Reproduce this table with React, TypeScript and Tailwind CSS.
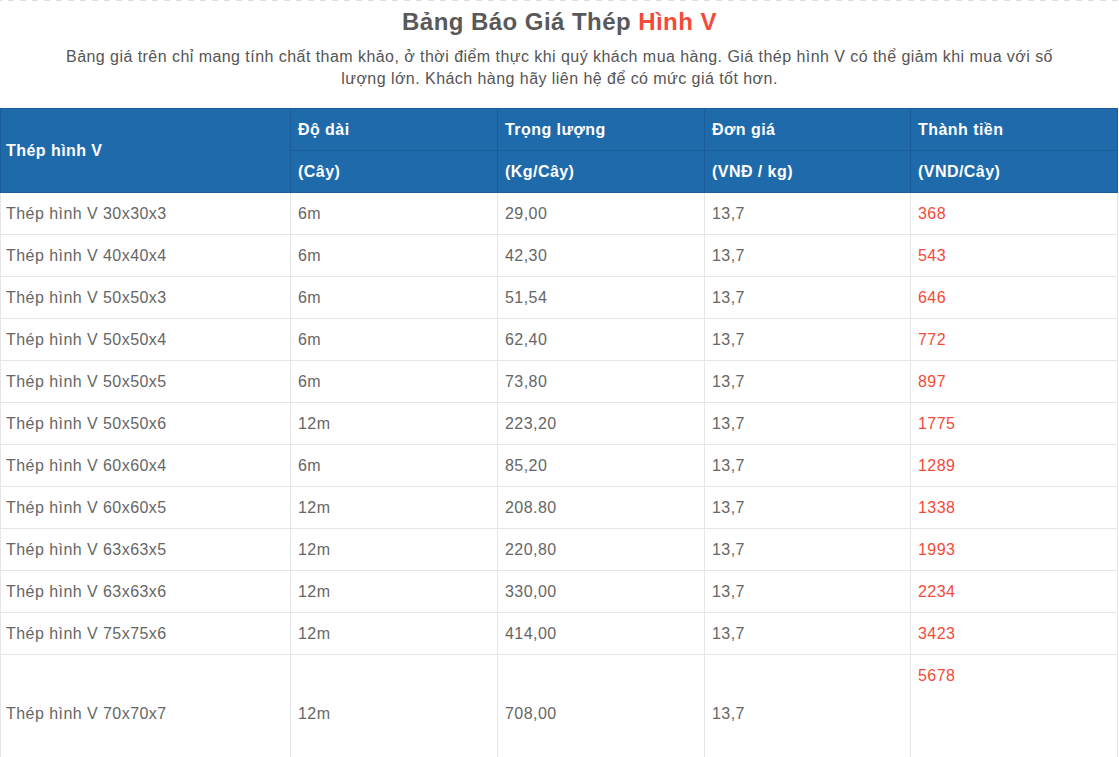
import React from 'react';

const rows = [
  { name: 'Thép hình V 30x30x3', len: '6m', weight: '29,00', price: '13,7', total: '368' },
  { name: 'Thép hình V 40x40x4', len: '6m', weight: '42,30', price: '13,7', total: '543' },
  { name: 'Thép hình V 50x50x3', len: '6m', weight: '51,54', price: '13,7', total: '646' },
  { name: 'Thép hình V 50x50x4', len: '6m', weight: '62,40', price: '13,7', total: '772' },
  { name: 'Thép hình V 50x50x5', len: '6m', weight: '73,80', price: '13,7', total: '897' },
  { name: 'Thép hình V 50x50x6', len: '12m', weight: '223,20', price: '13,7', total: '1775' },
  { name: 'Thép hình V 60x60x4', len: '6m', weight: '85,20', price: '13,7', total: '1289' },
  { name: 'Thép hình V 60x60x5', len: '12m', weight: '208.80', price: '13,7', total: '1338' },
  { name: 'Thép hình V 63x63x5', len: '12m', weight: '220,80', price: '13,7', total: '1993' },
  { name: 'Thép hình V 63x63x6', len: '12m', weight: '330,00', price: '13,7', total: '2234' },
  { name: 'Thép hình V 75x75x6', len: '12m', weight: '414,00', price: '13,7', total: '3423' },
];

const th = 'border border-[#1a5d99] px-[7px] py-2 text-left font-bold leading-[25px]';
const td = 'border border-[#e6e6e6] px-[7px] py-2 leading-[25px]';

export default function App() {
  return (
    <div className="bg-white font-['Liberation_Sans',Arial,sans-serif] text-[16px] tracking-[0.45px] text-[#666]">
      {/* dashed divider */}
      <div className="h-px bg-[repeating-linear-gradient(90deg,#ddd_0_2px,transparent_2px_8px,#ddd_8px_12px)]" />

      <h2 className="pt-[6px] text-center text-[24px] font-bold leading-[30px] text-[#595959]">
        Bảng Báo Giá Thép <span className="text-[#f44a3a]">Hình V</span>
      </h2>
      <p className="mx-auto mt-[9px] max-w-[1030px] px-1 text-center leading-[22px] text-[#555]">
        Bảng giá trên chỉ mang tính chất tham khảo, ở thời điểm thực khi quý khách mua hàng. Giá thép hình V có thể giảm khi mua với số lượng lớn. Khách hàng hãy liên hệ để có mức giá tốt hơn.
      </p>

      <table className="mt-[18px] w-[1117px] table-fixed border-collapse border border-[#e6e6e6]">
        <colgroup>
          <col className="w-[290px]" />
          <col className="w-[207px]" />
          <col className="w-[207px]" />
          <col className="w-[206px]" />
          <col className="w-[207px]" />
        </colgroup>
        <thead className="bg-[#1f6aab] text-white">
          <tr>
            <th rowSpan={2} className={`${th} pl-[5px]`}>Thép hình V</th>
            <th className={th}>Độ dài</th>
            <th className={th}>Trọng lượng</th>
            <th className={th}>Đơn giá</th>
            <th className={th}>Thành tiền</th>
          </tr>
          <tr>
            <th className={th}>(Cây)</th>
            <th className={th}>(Kg/Cây)</th>
            <th className={th}>(VNĐ / kg)</th>
            <th className={th}>(VND/Cây)</th>
          </tr>
        </thead>
        <tbody>
          {rows.map((r) => (
            <tr key={r.name}>
              <td className={`${td} pl-[5px]`}>{r.name}</td>
              <td className={td}>{r.len}</td>
              <td className={td}>{r.weight}</td>
              <td className={td}>{r.price}</td>
              <td className={`${td} text-[#f44a3a]`}>{r.total}</td>
            </tr>
          ))}
          <tr className="h-[117px]">
            <td className={`${td} pl-[5px]`}>Thép hình V 70x70x7</td>
            <td className={td}>12m</td>
            <td className={td}>708,00</td>
            <td className={td}>13,7</td>
            <td className={`${td} align-top text-[#f44a3a]`}>5678</td>
          </tr>
        </tbody>
      </table>
    </div>
  );
}
